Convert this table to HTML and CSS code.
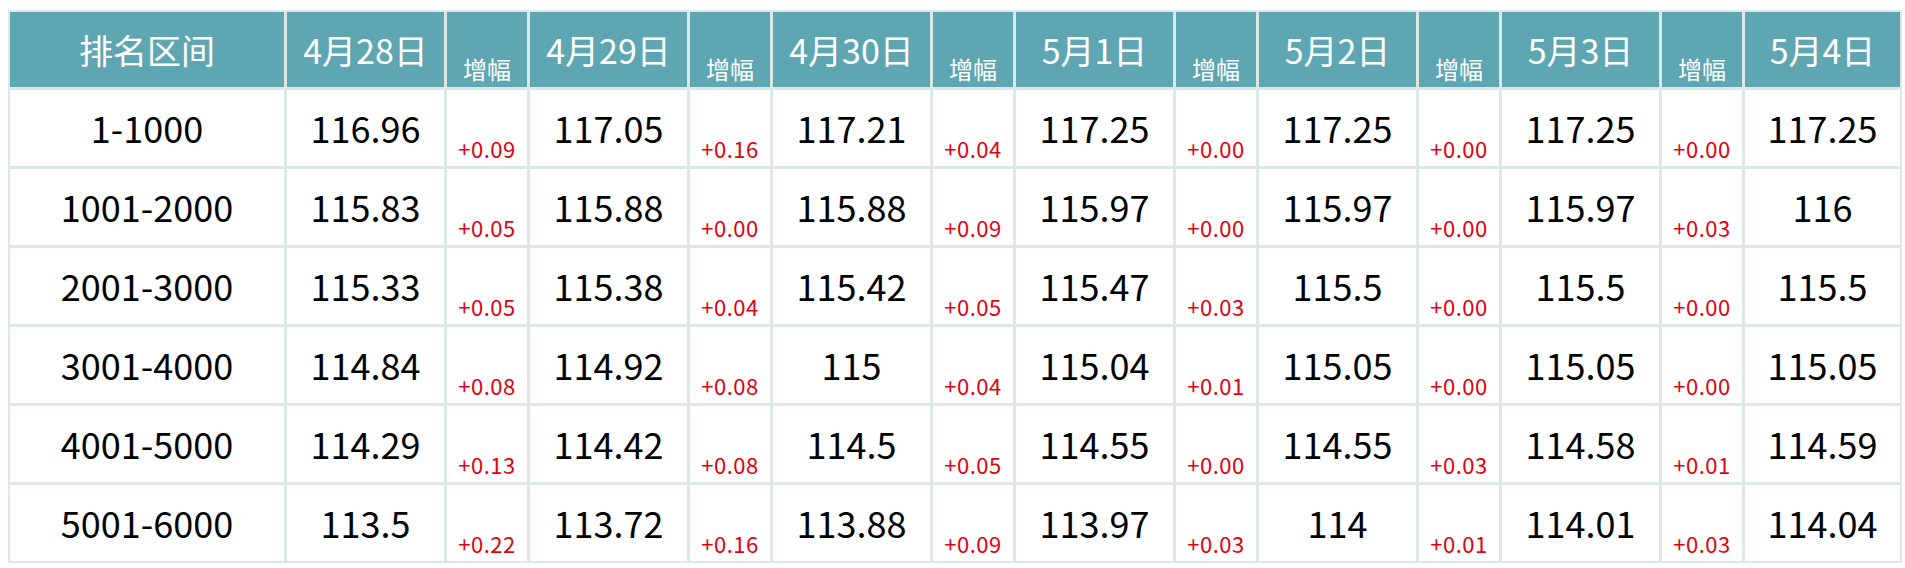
FILE: index.html
```html
<!DOCTYPE html>
<html lang="zh-CN">
<head>
<meta charset="utf-8">
<title>排名区间</title>
<link rel="stylesheet" href="styles.css">
</head>
<body>
<div class="page">
  <div class="grid">
    <div class="th main">排名区间</div>
    <div class="th">4月28日</div><div class="th rate">增幅</div>
    <div class="th">4月29日</div><div class="th rate">增幅</div>
    <div class="th">4月30日</div><div class="th rate">增幅</div>
    <div class="th">5月1日</div><div class="th rate">增幅</div>
    <div class="th">5月2日</div><div class="th rate">增幅</div>
    <div class="th">5月3日</div><div class="th rate">增幅</div>
    <div class="th">5月4日</div>

    <div class="td">1-1000</div>
    <div class="td">116.96</div><div class="td up">+0.09</div>
    <div class="td">117.05</div><div class="td up">+0.16</div>
    <div class="td">117.21</div><div class="td up">+0.04</div>
    <div class="td">117.25</div><div class="td up">+0.00</div>
    <div class="td">117.25</div><div class="td up">+0.00</div>
    <div class="td">117.25</div><div class="td up">+0.00</div>
    <div class="td">117.25</div>

    <div class="td">1001-2000</div>
    <div class="td">115.83</div><div class="td up">+0.05</div>
    <div class="td">115.88</div><div class="td up">+0.00</div>
    <div class="td">115.88</div><div class="td up">+0.09</div>
    <div class="td">115.97</div><div class="td up">+0.00</div>
    <div class="td">115.97</div><div class="td up">+0.00</div>
    <div class="td">115.97</div><div class="td up">+0.03</div>
    <div class="td">116</div>

    <div class="td">2001-3000</div>
    <div class="td">115.33</div><div class="td up">+0.05</div>
    <div class="td">115.38</div><div class="td up">+0.04</div>
    <div class="td">115.42</div><div class="td up">+0.05</div>
    <div class="td">115.47</div><div class="td up">+0.03</div>
    <div class="td">115.5</div><div class="td up">+0.00</div>
    <div class="td">115.5</div><div class="td up">+0.00</div>
    <div class="td">115.5</div>

    <div class="td">3001-4000</div>
    <div class="td">114.84</div><div class="td up">+0.08</div>
    <div class="td">114.92</div><div class="td up">+0.08</div>
    <div class="td">115</div><div class="td up">+0.04</div>
    <div class="td">115.04</div><div class="td up">+0.01</div>
    <div class="td">115.05</div><div class="td up">+0.00</div>
    <div class="td">115.05</div><div class="td up">+0.00</div>
    <div class="td">115.05</div>

    <div class="td">4001-5000</div>
    <div class="td">114.29</div><div class="td up">+0.13</div>
    <div class="td">114.42</div><div class="td up">+0.08</div>
    <div class="td">114.5</div><div class="td up">+0.05</div>
    <div class="td">114.55</div><div class="td up">+0.00</div>
    <div class="td">114.55</div><div class="td up">+0.03</div>
    <div class="td">114.58</div><div class="td up">+0.01</div>
    <div class="td">114.59</div>

    <div class="td">5001-6000</div>
    <div class="td">113.5</div><div class="td up">+0.22</div>
    <div class="td">113.72</div><div class="td up">+0.16</div>
    <div class="td">113.88</div><div class="td up">+0.09</div>
    <div class="td">113.97</div><div class="td up">+0.03</div>
    <div class="td">114</div><div class="td up">+0.01</div>
    <div class="td">114.01</div><div class="td up">+0.03</div>
    <div class="td">114.04</div>
  </div>
</div>
</body>
</html>
```
FILE: styles.css
```css
html, body {
  margin: 0;
  padding: 0;
  background: #ffffff;
}

.page {
  padding: 10px 0 0 8px;
  font-family: "Noto Sans CJK SC", "Noto Sans", sans-serif;
}

.grid {
  display: grid;
  width: max-content;
  grid-template-columns: 274px repeat(6, 157px 80px) 155px;
  grid-template-rows: 75px repeat(6, 76px);
  gap: 3px;
  padding: 2px;
  background: #dce8e5;
}

.th {
  background: #5ea6b2;
  color: #ffffff;
  font-size: 34px;
  display: flex;
  align-items: center;
  justify-content: center;
  line-height: 1;
}

.th.rate {
  font-size: 24px;
  align-items: flex-end;
  padding-bottom: 6px;
}

.td {
  background: #ffffff;
  color: #000000;
  font-size: 36px;
  display: flex;
  align-items: center;
  justify-content: center;
  line-height: 1;
  padding-bottom: 3px;
}

.td.up {
  color: #e3000f;
  font-size: 22px;
  letter-spacing: 0.5px;
  align-items: flex-end;
  padding-bottom: 7px;
}
```
